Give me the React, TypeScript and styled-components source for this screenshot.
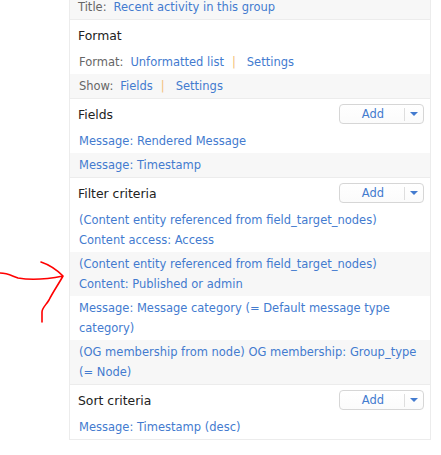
import React from 'react';
import styled, { createGlobalStyle } from 'styled-components';

const GlobalStyle = createGlobalStyle`
  html, body {
    margin: 0;
    padding: 0;
    background: #fff;
  }
  body {
    font-family: "DejaVu Sans", "Liberation Sans", sans-serif;
    font-size: 11.5px;
    color: #333;
  }
`;

const Page = styled.div`
  position: relative;
  width: 441px;
  height: 455px;
  overflow: hidden;
`;

const Panel = styled.div`
  margin-left: 69px;
  width: 360px;
  border: 1px solid #ececec;
  border-top: none;
`;

const Section = styled.div<{ first?: boolean }>`
  border-top: ${p => (p.first ? 'none' : '1px solid #ececec')};
`;

const Header = styled.div`
  height: 30px;
  display: flex;
  align-items: center;
  justify-content: space-between;
  padding: 0 6px 0 8px;
`;

const HeaderTitle = styled.span`
  font-size: 12.4px;
  color: #222;
`;

const Items = styled.div``;

const Item = styled.div<{ striped?: boolean }>`
  padding: 2px 8px 2px 9px;
  line-height: 20px;
  background: ${p => (p.striped ? '#f7f7f7' : '#fff')};
`;

const TitleItem = styled(Item)`
  padding: 0 8px;
  line-height: 15px;
  height: 19px;
`;

const Label = styled.span`
  color: #666;
  margin-right: 7px;
`;

const Link = styled.a`
  color: #437bcf;
  text-decoration: none;
`;

const Pipe = styled.span`
  color: #f3c07a;
  margin: 0 11px 0 8px;
`;

const AddButton = styled.div`
  width: 83px;
  height: 18px;
  border: 1px solid #d6d6d6;
  border-radius: 4px;
  display: flex;
  align-items: center;
  background: linear-gradient(#fff, #fbfbfb);
`;

const AddLabel = styled.span`
  flex: 1;
  text-align: center;
  color: #437bcf;
  font-size: 11.5px;
  padding-left: 2px;
`;

const Divider = styled.span`
  width: 1px;
  height: 13px;
  background: #dedede;
`;

const Caret = styled.span`
  width: 18px;
  display: flex;
  justify-content: center;
  &::after {
    content: '';
    border-left: 4px solid transparent;
    border-right: 4px solid transparent;
    border-top: 4px solid #437bcf;
  }
`;

const Arrow = styled.svg`
  position: absolute;
  left: 0;
  top: 255px;
`;

const Add = () => (
  <AddButton>
    <AddLabel>Add</AddLabel>
    <Divider />
    <Caret />
  </AddButton>
);

const filterItems = [
  '(Content entity referenced from field_target_nodes) Content access: Access',
  '(Content entity referenced from field_target_nodes) Content: Published or admin',
  'Message: Message category (= Default message type category)',
  '(OG membership from node) OG membership: Group_type (= Node)',
];

const App: React.FC = () => {
  return (
    <Page>
      <GlobalStyle />
      <Panel>
        <Section first>
          <TitleItem striped>
            <Label>Title:</Label>
            <Link>Recent activity in this group</Link>
          </TitleItem>
        </Section>
        <Section>
          <Header>
            <HeaderTitle>Format</HeaderTitle>
          </Header>
          <Items>
            <Item>
              <Label>Format:</Label>
              <Link>Unformatted list</Link>
              <Pipe>|</Pipe>
              <Link>Settings</Link>
            </Item>
            <Item striped>
              <Label>Show:</Label>
              <Link>Fields</Link>
              <Pipe>|</Pipe>
              <Link>Settings</Link>
            </Item>
          </Items>
        </Section>
        <Section>
          <Header>
            <HeaderTitle>Fields</HeaderTitle>
            <Add />
          </Header>
          <Items>
            <Item><Link>Message: Rendered Message</Link></Item>
            <Item striped><Link>Message: Timestamp</Link></Item>
          </Items>
        </Section>
        <Section>
          <Header>
            <HeaderTitle>Filter criteria</HeaderTitle>
            <Add />
          </Header>
          <Items>
            {filterItems.map((text, i) => (
              <Item key={i} striped={i % 2 === 1}>
                <Link>{text}</Link>
              </Item>
            ))}
          </Items>
        </Section>
        <Section>
          <Header>
            <HeaderTitle>Sort criteria</HeaderTitle>
            <Add />
          </Header>
          <Items>
            <Item><Link>Message: Timestamp (desc)</Link></Item>
          </Items>
        </Section>
      </Panel>
      <Arrow width="70" height="70" viewBox="0 255 70 70">
        <path
          d="M0 273 C8 273 12 276 18 278 C30 280 48 279 63 276 M41 262 C50 265 57 270 63 276 C58 285 53 292 49 300 C46 305 42 308 42 312 L42 322"
          fill="none"
          stroke="#f00"
          strokeWidth="1.6"
          strokeLinecap="round"
          strokeLinejoin="round"
        />
      </Arrow>
    </Page>
  );
};

export default App;
